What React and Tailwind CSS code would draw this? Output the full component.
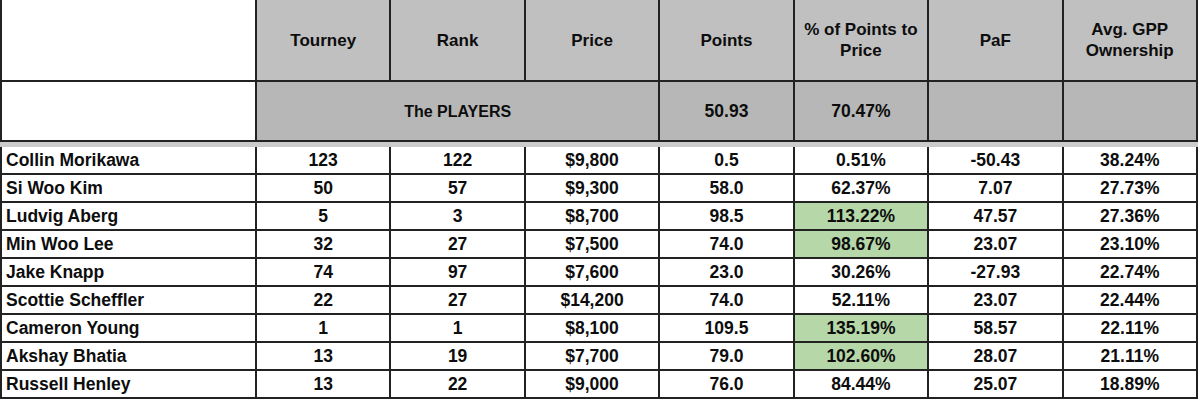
import React from "react";

const rows = [
  ["Collin Morikawa", "123", "122", "$9,800", "0.5", "0.51%", "-50.43", "38.24%", false],
  ["Si Woo Kim", "50", "57", "$9,300", "58.0", "62.37%", "7.07", "27.73%", false],
  ["Ludvig Aberg", "5", "3", "$8,700", "98.5", "113.22%", "47.57", "27.36%", true],
  ["Min Woo Lee", "32", "27", "$7,500", "74.0", "98.67%", "23.07", "23.10%", true],
  ["Jake Knapp", "74", "97", "$7,600", "23.0", "30.26%", "-27.93", "22.74%", false],
  ["Scottie Scheffler", "22", "27", "$14,200", "74.0", "52.11%", "23.07", "22.44%", false],
  ["Cameron Young", "1", "1", "$8,100", "109.5", "135.19%", "58.57", "22.11%", true],
  ["Akshay Bhatia", "13", "19", "$7,700", "79.0", "102.60%", "28.07", "21.11%", true],
  ["Russell Henley", "13", "22", "$9,000", "76.0", "84.44%", "25.07", "18.89%", false],
];

const headers = ["Tourney", "Rank", "Price", "Points", "% of Points to Price", "PaF", "Avg. GPP Ownership"];

export default function App() {
  return (
    <div
      className="w-[1200px] h-[400px] bg-white overflow-hidden text-[#0d0d0d] font-bold"
      style={{ fontFamily: '"Liberation Sans", Arial, sans-serif' }}
    >
      <div className="grid w-[1198px] grid-cols-[257px_repeat(7,1fr)] text-[17px] leading-[21px]">
        {/* header row */}
        <div className="h-[82px] border-l-2 border-r-2 border-b-2 border-[#222] bg-white" />
        {headers.map((h) => (
          <div
            key={h}
            className="h-[82px] border-r-2 border-b-2 border-[#222] bg-[#c0c0c0] flex items-center justify-center text-center px-2"
          >
            {h === "% of Points to Price" ? (
              <span>% of Points to<br />Price</span>
            ) : h === "Avg. GPP Ownership" ? (
              <span>Avg. GPP<br />Ownership</span>
            ) : (
              h
            )}
          </div>
        ))}

        {/* summary row */}
        <div className="h-[60px] border-l-2 border-r-2 border-b-2 border-[#222] bg-white" />
        <div className="col-span-3 h-[60px] border-r-2 border-b-2 border-[#222] bg-[#b7b7b7] flex items-center justify-center text-[16px]">
          The PLAYERS
        </div>
        <div className="h-[60px] border-r-2 border-b-2 border-[#222] bg-[#b7b7b7] flex items-center justify-center text-[17.5px]">
          50.93
        </div>
        <div className="h-[60px] border-r-2 border-b-2 border-[#222] bg-[#b7b7b7] flex items-center justify-center text-[17.5px]">
          70.47%
        </div>
        <div className="h-[60px] border-r-2 border-b-2 border-[#222] bg-[#b7b7b7]" />
        <div className="h-[60px] border-r-2 border-b-2 border-[#222] bg-[#b7b7b7]" />

        {/* separator band */}
        <div className="col-span-8 h-[5px] bg-[#cbcbcb]" />

        {/* data rows */}
        {rows.map((r) => (
          <React.Fragment key={r[0]}>
            <div className="h-[28px] border-l-2 border-r-2 border-b-2 border-[#222] flex items-center pl-1 text-[17.5px]">
              {r[0]}
            </div>
            {r.slice(1, 8).map((v, i) => (
              <div
                key={i}
                className={
                  "h-[28px] border-r-2 border-b-2 border-[#222] flex items-center justify-center text-[17.5px] " +
                  (i === 4 && r[8] ? "bg-[#b6d7a8]" : "bg-white")
                }
              >
                {v}
              </div>
            ))}
          </React.Fragment>
        ))}
      </div>
    </div>
  );
}
